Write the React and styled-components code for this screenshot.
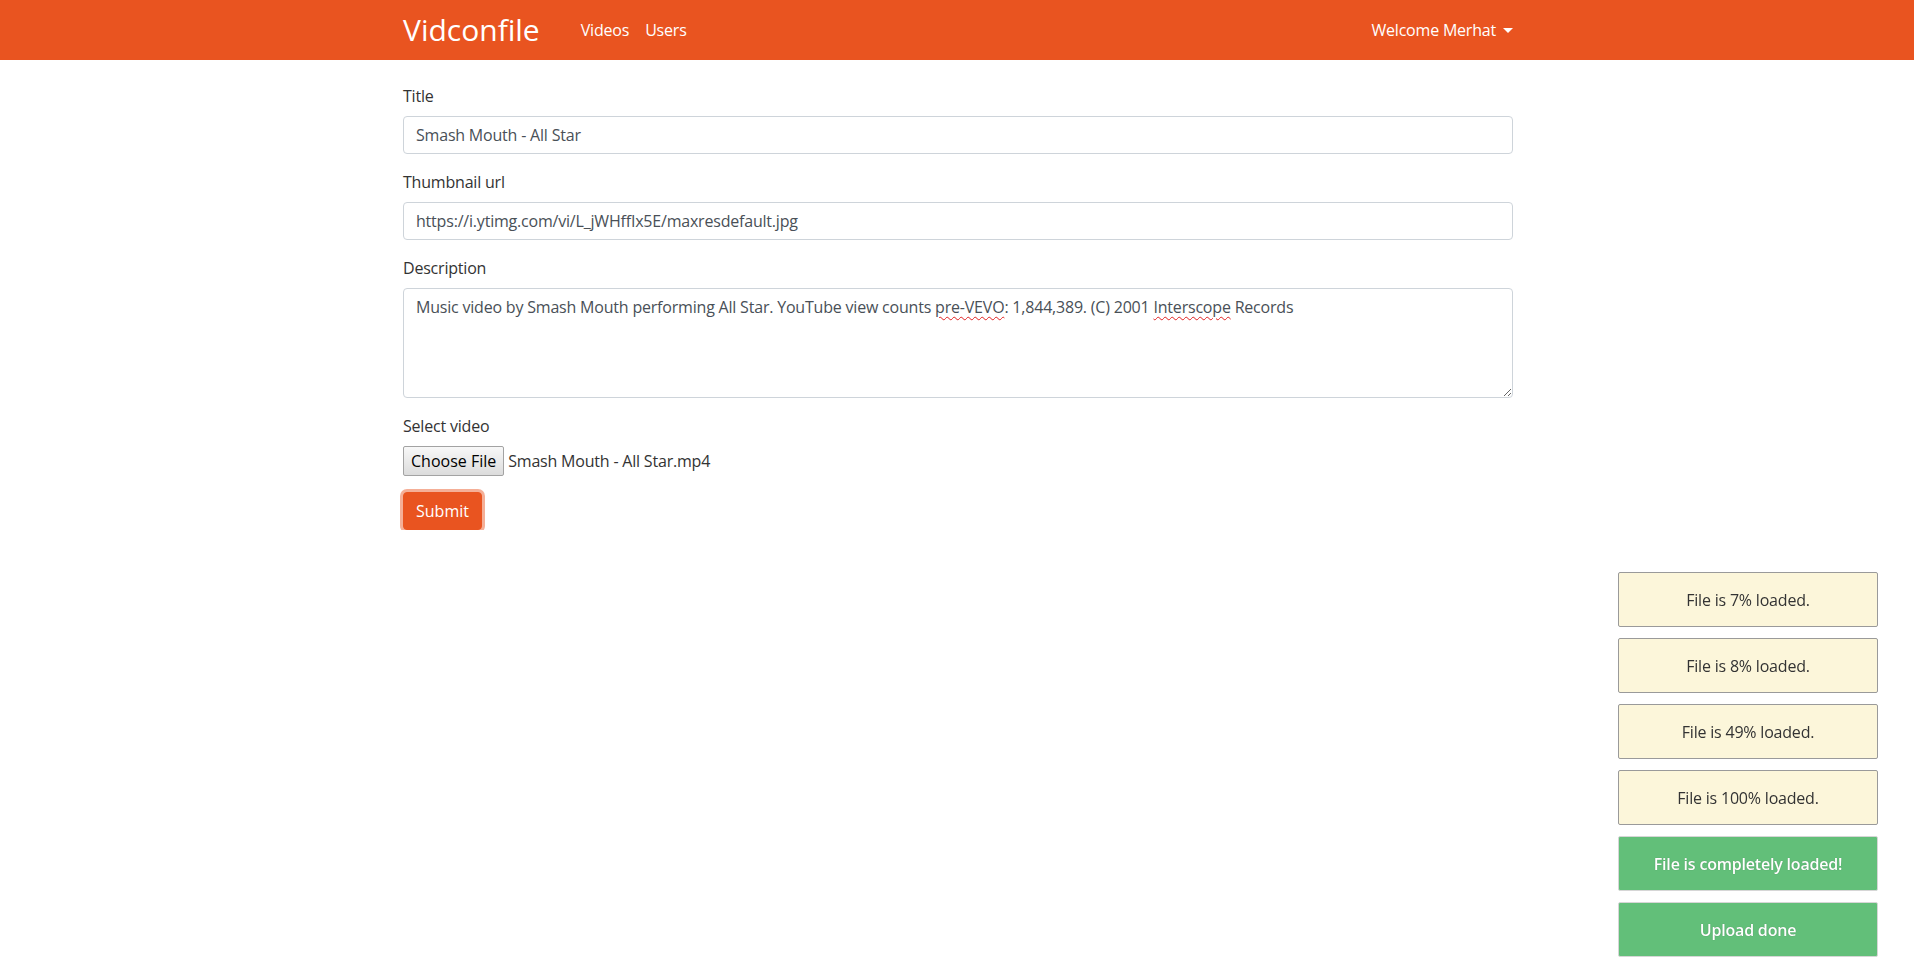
import React from "react";
import styled, { createGlobalStyle } from "styled-components";

const Global = createGlobalStyle`
  html, body { margin: 0; padding: 0; background: #fff; }
  body {
    font-family: "Open Sans", "Noto Sans", sans-serif;
    font-size: 16px;
    line-height: 1.5;
    color: #333;
    letter-spacing: -0.2px;
  }
  * { box-sizing: border-box; }
`;

const Navbar = styled.nav`
  background: #e95420;
  height: 60px;
  display: flex;
  align-items: center;
`;

const Container = styled.div`
  width: 100%;
  max-width: 1140px;
  margin: 0 auto;
  padding: 0 14px 0 16px;
`;

const NavInner = styled(Container)`
  display: flex;
  align-items: center;
`;

const Brand = styled.a`
  color: #fff;
  font-size: 30px;
  line-height: 1;
  text-decoration: none;
  margin-right: 33px;
  letter-spacing: 0;
`;

const NavList = styled.div`
  display: flex;
  align-items: center;
`;

const NavLink = styled.a`
  color: #fff;
  font-size: 16px;
  padding: 8px;
  text-decoration: none;
`;

const UserMenu = styled.a`
  margin-left: auto;
  color: #fff;
  font-size: 16px;
  text-decoration: none;
  display: flex;
  align-items: center;
  &::after {
    content: "";
    display: inline-block;
    margin-left: 7px;
    border-top: 5px solid #fff;
    border-left: 5px solid transparent;
    border-right: 5px solid transparent;
  }
`;

const Main = styled(Container)`
  padding-top: 24px;
`;

const FormGroup = styled.div`
  margin-bottom: 16px;
`;

const Label = styled.label`
  display: block;
  margin-bottom: 8px;
  color: #333;
  line-height: 24px;
`;

const Input = styled.input`
  display: block;
  width: 100%;
  height: 38px;
  padding: 6px 12px;
  font-family: inherit;
  font-size: 16px;
  letter-spacing: -0.2px;
  line-height: 24px;
  color: #495057;
  background: #fff;
  border: 1px solid #ced4da;
  border-radius: 4px;
  outline: none;
`;

const TextArea = styled.div`
  width: 100%;
  height: 110px;
  padding: 6px 12px;
  font-size: 16px;
  line-height: 24px;
  color: #495057;
  background: #fff;
  border: 1px solid #ced4da;
  border-radius: 4px;
  overflow: auto;
  resize: vertical;
`;

const Misspelled = styled.span`
  text-decoration: underline wavy #e02020;
  text-decoration-thickness: 1px;
  text-underline-offset: 3px;
`;

const FileRow = styled.div`
  display: flex;
  align-items: center;
  height: 30px;
`;

const FileButton = styled.button`
  height: 30px;
  padding: 1px 7px;
  font-family: inherit;
  font-size: 16px;
  letter-spacing: 0;
  color: #000;
  background: linear-gradient(#f8f8f8, #dcdcdc);
  border: 1px solid #a3a3a3;
  border-radius: 2px;
  margin-right: 4px;
`;

const FileName = styled.span`
  color: #333;
`;

const SubmitButton = styled.button`
  font-family: inherit;
  font-size: 16px;
  letter-spacing: 0;
  line-height: 24px;
  padding: 6px 12px;
  color: #fff;
  background: #e95420;
  border: 1px solid #e95420;
  border-radius: 4px;
  box-shadow: 0 0 0 3px rgba(236, 110, 65, 0.55);
`;

const Notifications = styled.div`
  position: fixed;
  right: 36px;
  bottom: 9px;
  width: 260px;
  display: flex;
  flex-direction: column;
  gap: 11px;
`;

const Note = styled.div`
  height: 55px;
  display: flex;
  align-items: center;
  justify-content: center;
  font-size: 16px;
  border-radius: 2px;
  border: 1px solid ${(p) => (p.$success ? "#d6d6d6" : "#9a9a9a")};
  background: ${(p) => (p.$success ? "#62bf79" : "#fcf6da")};
  color: ${(p) => (p.$success ? "#fff" : "#333")};
  font-weight: ${(p) => (p.$success ? 600 : 400)};
  text-shadow: ${(p) => (p.$success ? "0 0 1px rgba(0,0,0,0.3)" : "none")};
`;

const notes = [
  { text: "File is 7% loaded." },
  { text: "File is 8% loaded." },
  { text: "File is 49% loaded." },
  { text: "File is 100% loaded." },
  { text: "File is completely loaded!", success: true },
  { text: "Upload done", success: true },
];

export default function App() {
  return (
    <>
      <Global />
      <Navbar>
        <NavInner>
          <Brand href="#">Vidconfile</Brand>
          <NavList>
            <NavLink href="#">Videos</NavLink>
            <NavLink href="#">Users</NavLink>
          </NavList>
          <UserMenu href="#">Welcome Merhat</UserMenu>
        </NavInner>
      </Navbar>
      <Main>
        <FormGroup>
          <Label>Title</Label>
          <Input readOnly value="Smash Mouth - All Star" />
        </FormGroup>
        <FormGroup>
          <Label>Thumbnail url</Label>
          <Input readOnly value="https://i.ytimg.com/vi/L_jWHffIx5E/maxresdefault.jpg" />
        </FormGroup>
        <FormGroup>
          <Label>Description</Label>
          <TextArea>
            Music video by Smash Mouth performing All Star. YouTube view counts{" "}
            <Misspelled>pre-VEVO</Misspelled>: 1,844,389. (C) 2001{" "}
            <Misspelled>Interscope</Misspelled> Records
          </TextArea>
        </FormGroup>
        <FormGroup>
          <Label>Select video</Label>
          <FileRow>
            <FileButton type="button">Choose File</FileButton>
            <FileName>Smash Mouth - All Star.mp4</FileName>
          </FileRow>
        </FormGroup>
        <SubmitButton type="button">Submit</SubmitButton>
      </Main>
      <Notifications>
        {notes.map((n) => (
          <Note key={n.text} $success={n.success}>
            {n.text}
          </Note>
        ))}
      </Notifications>
    </>
  );
}
